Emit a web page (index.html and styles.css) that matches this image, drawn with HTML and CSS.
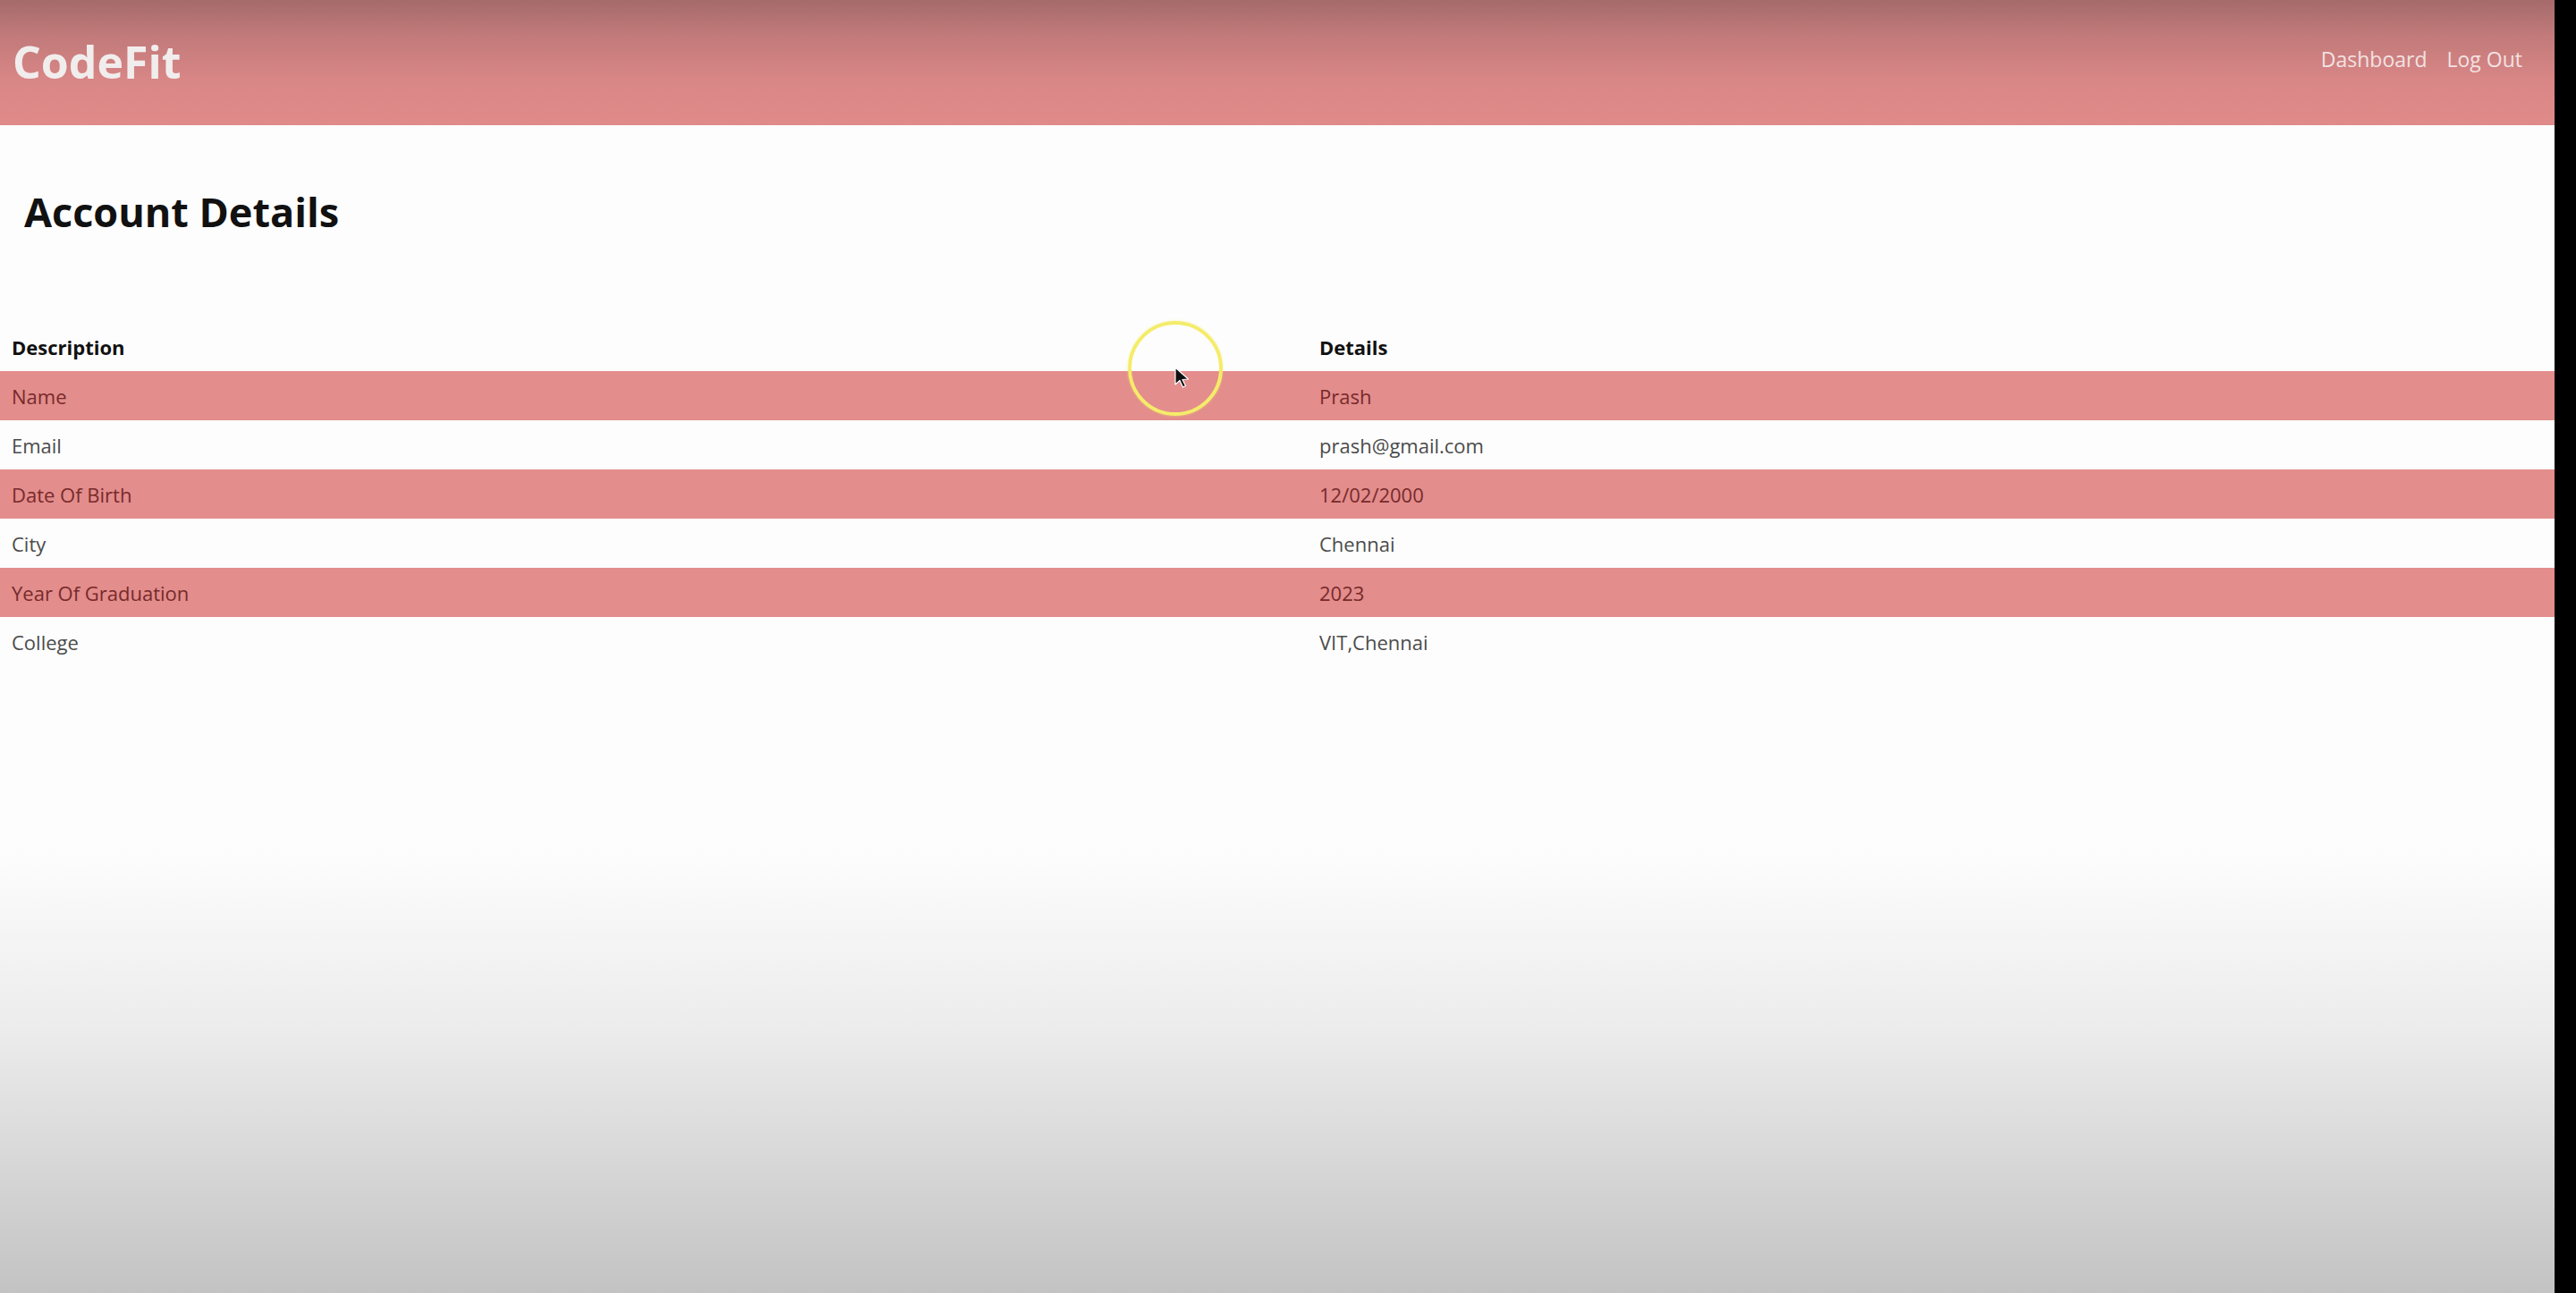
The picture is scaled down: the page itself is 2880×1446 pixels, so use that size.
FILE: index.html
```html
<!DOCTYPE html>
<html lang="en">
<head>
<meta charset="utf-8">
<title>CodeFit - Account Details</title>
<link rel="stylesheet" href="styles.css">
</head>
<body>
<div class="screen">
  <div class="page">
    <header class="topbar">
      <div class="logo">CodeFit</div>
      <nav class="nav">
        <a href="#">Dashboard</a>
        <a href="#">Log Out</a>
      </nav>
    </header>
    <main class="content">
      <h1 class="title">Account Details</h1>
      <table class="details">
        <thead>
          <tr><th class="col-desc">Description</th><th>Details</th></tr>
        </thead>
        <tbody>
          <tr class="alt"><td>Name</td><td>Prash</td></tr>
          <tr><td>Email</td><td>prash@gmail.com</td></tr>
          <tr class="alt"><td>Date Of Birth</td><td>12/02/2000</td></tr>
          <tr><td>City</td><td>Chennai</td></tr>
          <tr class="alt"><td>Year Of Graduation</td><td>2023</td></tr>
          <tr><td>College</td><td>VIT,Chennai</td></tr>
        </tbody>
      </table>
    </main>
    <div class="cursor-ring"></div>
    <svg class="cursor" width="18" height="26" viewBox="0 0 18 26"><path d="M1 1 L1 20 L6 15.5 L9.5 23 L12.5 21.5 L9 14.5 L15.5 14 Z" fill="#111" stroke="#fff" stroke-width="1.2" stroke-linejoin="round"/></svg>
  </div>
  <div class="edge"></div>
</div>
</body>
</html>
```
FILE: styles.css
```css
html, body {
  margin: 0;
  padding: 0;
  height: 100%;
}
body {
  background: #000;
  font-family: "Open Sans", "Noto Sans", sans-serif;
}
.screen {
  display: flex;
  height: 1446px;
  overflow: hidden;
}
.page {
  flex: 1;
  position: relative;
  background: linear-gradient(to bottom, #fdfdfd 0, #fdfdfd 950px, #ececec 1150px, #c3c3c3 1446px);
}
.edge {
  width: 24px;
  background: #000;
}
.topbar {
  height: 140px;
  display: flex;
  align-items: center;
  justify-content: space-between;
  padding: 0 36px 0 14px;
  background: linear-gradient(to bottom, #a56a6b 0, #c27a7a 40px, #d98686 90px, #e08b8a 140px);
}
.logo {
  color: #f1eded;
  font-size: 50px;
  font-weight: 700;
  margin-top: -2px;
}
.nav {
  display: flex;
  gap: 22px;
  margin-top: -8px;
}
.nav a {
  color: #f2e2e2;
  text-decoration: none;
  font-size: 23px;
}
.title {
  margin: 0;
  padding: 66px 0 0 27px;
  font-size: 45px;
  font-weight: 700;
  color: #111;
  height: 220px;
  box-sizing: border-box;
}
.details {
  width: 100%;
  border-collapse: collapse;
  font-size: 22px;
}
.details th,
.details td {
  text-align: left;
  padding: 0 13px;
  height: 55px;
}
.details th {
  color: #111;
  font-weight: 700;
  vertical-align: middle;
}
.col-desc {
  width: 1436px;
}
.details td {
  color: #4b4b4b;
}
.details tr.alt td {
  background: #e38d8c;
  color: #772a2b;
}
.cursor-ring {
  position: absolute;
  left: 1261px;
  top: 359px;
  width: 106px;
  height: 106px;
  border: 4px solid #f4ec6a;
  border-radius: 50%;
  box-sizing: border-box;
  box-shadow: 0 0 3px rgba(244, 236, 106, 0.6);
}
.cursor {
  position: absolute;
  left: 1313px;
  top: 410px;
}
```
